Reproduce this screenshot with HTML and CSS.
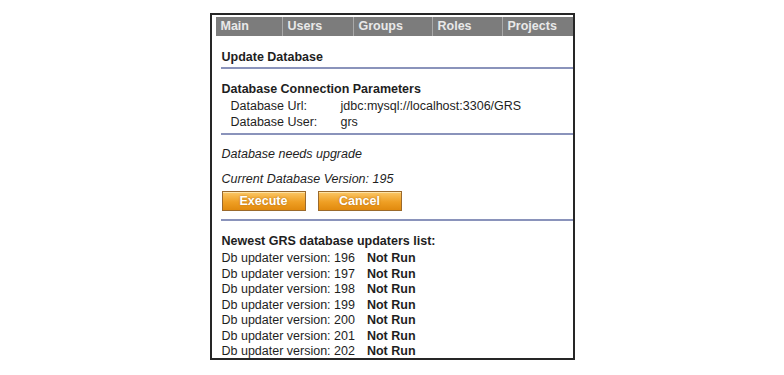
FILE: index.html
```html
<!DOCTYPE html>
<html lang="en">
<head>
  <meta charset="UTF-8" />
  <title>Update Database</title>
  <link rel="stylesheet" href="styles.css">
</head>
<body>

<div class="frame">
  <!-- Top menu -->
  <div class="nav">
    <div class="nav-item">Main</div>
    <div class="nav-item users">Users</div>
    <div class="nav-item groups">Groups</div>
    <div class="nav-item roles">Roles</div>
    <div class="nav-item projects">Projects</div>
  </div>

  <div class="content">
    <div class="section title-section">
      <h2>Update Database</h2>
    </div>

    <div class="section params">
      <h3>Database Connection Parameters</h3>
      <table class="params-table">
        <tr><td class="label">Database Url:</td><td>jdbc:mysql://localhost:3306/GRS</td></tr>
        <tr><td class="label">Database User:</td><td>grs</td></tr>
      </table>
    </div>

    <div class="section status">
      <p class="note">Database needs upgrade</p>
      <p class="note version">Current Database Version: 195</p>
      <div class="buttons">
        <button class="btn">Execute</button>
        <button class="btn">Cancel</button>
      </div>
    </div>

    <div class="section updaters">
      <h3>Newest GRS database updaters list:</h3>
      <table class="updaters-table">
        <tr><td>Db updater version: 196</td><td class="state">Not Run</td></tr>
        <tr><td>Db updater version: 197</td><td class="state">Not Run</td></tr>
        <tr><td>Db updater version: 198</td><td class="state">Not Run</td></tr>
        <tr><td>Db updater version: 199</td><td class="state">Not Run</td></tr>
        <tr><td>Db updater version: 200</td><td class="state">Not Run</td></tr>
        <tr><td>Db updater version: 201</td><td class="state">Not Run</td></tr>
        <tr><td>Db updater version: 202</td><td class="state">Not Run</td></tr>
      </table>
    </div>
  </div>
</div>

</body>
</html>
```

FILE: styles.css
```css
body {
  margin: 0;
  background: #ffffff;
  font-family: 'Liberation Sans', Arial, sans-serif;
  font-size: 12.5px;
  color: #1e1e1e;
  display: flex;
  justify-content: center;
  padding-top: 13px;
}

.frame {
  box-sizing: border-box;
  width: 365px;
  height: 347px;
  border: 2px solid #262626;
  padding: 2px 0 0 4px;
  overflow: hidden;
}

.nav {
  display: flex;
  width: 420px;
  height: 19px;
  background: #7c7c7c;
}

.nav-item {
  box-sizing: border-box;
  width: 67px;
  padding-left: 5px;
  border-right: 1px solid #a9a9a9;
  color: #e9e9e9;
  font-weight: bold;
  line-height: 19px;
}

.nav-item.users { width: 71px; }
.nav-item.groups { width: 79px; }
.nav-item.roles { width: 70px; }
.nav-item.projects { width: 100px; border-right: none; }

.content {
  margin-left: 5px;
}

.section {
  border-bottom: 2px solid #8a93bb;
}

.section:last-child {
  border-bottom: none;
}

h2, h3 {
  margin: 0;
  font-size: 12.5px;
  font-weight: bold;
  line-height: 15px;
}

.title-section {
  padding: 14px 0 2px 1px;
}

.params {
  padding: 13px 0 3px 1px;
}

.params-table {
  border-collapse: collapse;
  margin-left: 9px;
  margin-top: 1px;
}

.params-table td {
  padding: 0;
  line-height: 16px;
}

.params-table .label {
  width: 110px;
}

.status {
  padding: 12px 0 8px 1px;
}

.note {
  margin: 0;
  font-style: italic;
  line-height: 15px;
}

.note.version {
  margin-top: 10px;
}

.buttons {
  display: flex;
  gap: 12px;
  margin-top: 4px;
}

.btn {
  box-sizing: border-box;
  width: 84px;
  height: 20px;
  padding: 0;
  border: 1px solid #9b6a2c;
  background: linear-gradient(#fbc766, #ef9f24 55%, #e18a0e);
  box-shadow: inset 0 1px 0 #fde3a8;
  color: #ffffff;
  font-family: 'Liberation Sans', Arial, sans-serif;
  font-size: 12.5px;
  font-weight: bold;
  text-shadow: 0 0 2px #b06a10;
  cursor: pointer;
}

.updaters {
  padding: 13px 0 0 1px;
}

.updaters-table {
  border-collapse: collapse;
  margin-top: 2px;
}

.updaters-table td {
  padding: 0;
  line-height: 15.5px;
}

.updaters-table .state {
  padding-left: 12px;
  font-weight: bold;
}
```
